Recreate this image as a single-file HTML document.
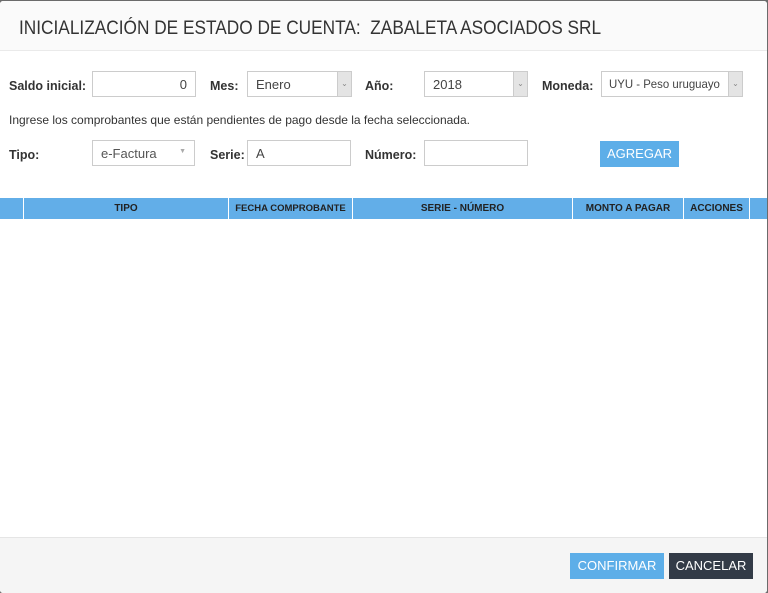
<!DOCTYPE html>
<html><head><style>
*{box-sizing:border-box;margin:0;padding:0}
body{width:768px;height:593px;background:#6b6b6b;font-family:"Liberation Sans",sans-serif;font-size:13px;color:#333;position:relative;overflow:hidden}
.dlg{position:absolute;left:0;top:1px;width:767px;height:592px;background:#fff;border-radius:3px;overflow:hidden}
.hdr{position:absolute;left:0;top:0;width:100%;height:50px;background:#fafafa;border-bottom:1px solid #eaeaea}
.hdr h1{position:absolute;left:19px;top:16px;font-weight:normal;font-size:19.5px;color:#333;white-space:nowrap;transform:scaleX(0.885);transform-origin:left top}
.a{position:absolute;white-space:nowrap}
.lb{position:absolute;font-weight:bold;font-size:12.5px;white-space:nowrap}
.in{position:absolute;border:1px solid #ccc;background:#fff;height:26px;font-size:13px;padding:5px 8px;color:#444;white-space:nowrap;overflow:hidden}
.sel .ar{position:absolute;right:0;top:0;width:14px;height:100%;background:#e4e4e4;border-left:1px solid #ccc;color:#888;font-size:8px;text-align:center;line-height:24px}
.th{position:absolute;top:197px;height:21px;background:#62aee8;border-right:1px solid #fff;color:#222;font-weight:bold;font-size:10px;text-align:center;line-height:21px;white-space:nowrap;overflow:hidden}
.ftr{position:absolute;left:0;top:536px;width:100%;height:56px;background:#f5f5f5;border-top:1px solid #e5e5e5}
.btn{position:absolute;height:26px;color:#fff;font-size:13px;text-align:center;line-height:26px}
</style></head><body>
<div class="dlg">
<div class="hdr"><h1>INICIALIZACIÓN DE ESTADO DE CUENTA:&nbsp; ZABALETA ASOCIADOS SRL</h1></div>

<div class="lb" style="left:9px;top:78px">Saldo inicial:</div>
<div class="in" style="left:92px;top:70px;width:104px;text-align:right">0</div>
<div class="lb" style="left:210px;top:78px">Mes:</div>
<div class="in sel" style="left:247px;top:70px;width:105px">Enero<span class="ar">⌄</span></div>
<div class="lb" style="left:365px;top:78px">Año:</div>
<div class="in sel" style="left:424px;top:70px;width:104px">2018<span class="ar">⌄</span></div>
<div class="lb" style="left:542px;top:78px">Moneda:</div>
<div class="in sel" style="left:601px;top:70px;width:142px;font-size:12px;padding-left:7px"><span style="display:inline-block;transform:scaleX(0.95);transform-origin:left">UYU - Peso uruguayo</span><span class="ar">⌄</span></div>

<div class="a" style="left:9px;top:112px;font-size:12px">Ingrese los comprobantes que están pendientes de pago desde la fecha seleccionada.</div>

<div class="lb" style="left:9px;top:147px">Tipo:</div>
<div class="in" style="left:92px;top:139px;width:103px;color:#555">e-Factura<span style="position:absolute;right:8px;top:7px;color:#aaa;font-size:7px">▼</span></div>
<div class="lb" style="left:210px;top:147px">Serie:</div>
<div class="in" style="left:247px;top:139px;width:104px">A</div>
<div class="lb" style="left:365px;top:147px">Número:</div>
<div class="in" style="left:424px;top:139px;width:104px"></div>
<div class="btn" style="left:600px;top:140px;width:79px;background:#5daee8">AGREGAR</div>

<div class="th" style="left:0;width:24px"></div>
<div class="th" style="left:24px;width:205px">TIPO</div>
<div class="th" style="left:229px;width:124px;font-size:9.5px">FECHA COMPROBANTE</div>
<div class="th" style="left:353px;width:220px">SERIE - NÚMERO</div>
<div class="th" style="left:573px;width:111px">MONTO A PAGAR</div>
<div class="th" style="left:684px;width:66px">ACCIONES</div>
<div class="th" style="left:750px;width:17px;border:none"></div>

<div class="ftr"></div>
<div class="btn" style="left:570px;top:552px;width:94px;background:#5daee8">CONFIRMAR</div>
<div class="btn" style="left:669px;top:552px;width:84px;background:#333b47">CANCELAR</div>
</div>
</body></html>
